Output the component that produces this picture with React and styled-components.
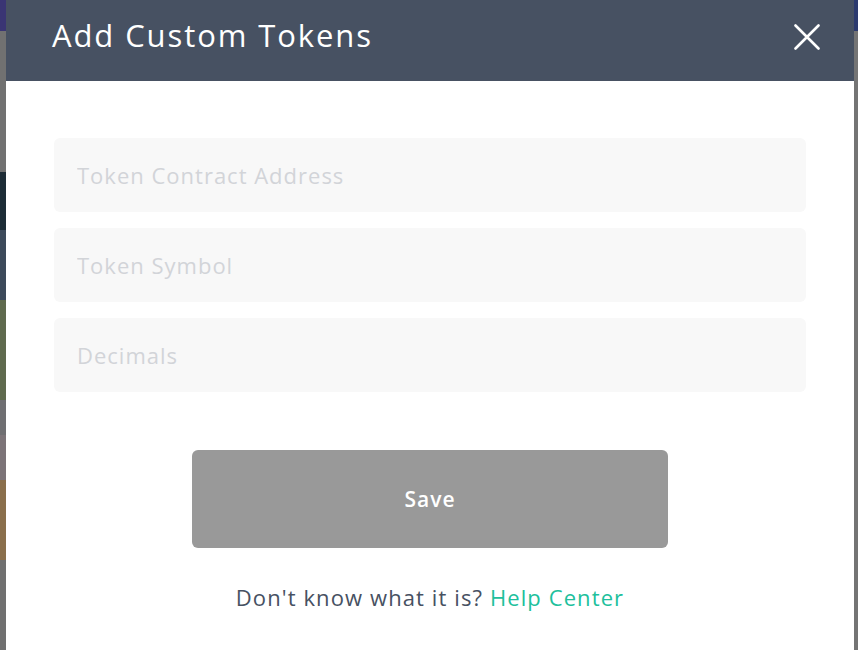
import React from 'react'
import styled, { createGlobalStyle } from 'styled-components'

const GlobalStyle = createGlobalStyle`
  html, body {
    margin: 0;
    padding: 0;
  }
  body {
    font-family: "Open Sans", "Liberation Sans", sans-serif;
  }
`

// the app behind the modal, only its edges show
const Page = styled.div`
  min-height: 650px;
  display: flex;
  padding-left: 6px;
  padding-right: 4px;
  background:
    linear-gradient(to bottom, #2c3a6e 0 31px, #747474 31px) right top / 4px 100% no-repeat,
    linear-gradient(
      to bottom,
      #3a3574 0 31px,
      #717171 31px 172px,
      #1d2c36 172px 230px,
      #3c4a5a 230px 300px,
      #5f6a4e 300px 400px,
      #6f6f72 400px 435px,
      #7c7478 435px 480px,
      #8a6f4c 480px 560px,
      #707070 560px
    );
`

const Modal = styled.div`
  flex: 1;
  background: #ffffff;
  display: flex;
  flex-direction: column;
  min-height: 650px;
`

const Header = styled.div`
  height: 81px;
  box-sizing: border-box;
  background: #475162;
  display: flex;
  align-items: center;
  justify-content: space-between;
  padding: 0 34px 12px 46px;
`

const Title = styled.h2`
  margin: 0;
  color: #ffffff;
  font-size: 31px;
  font-weight: 400;
  letter-spacing: 1.9px;
`

const CloseButton = styled.button`
  width: 26px;
  height: 26px;
  padding: 0;
  border: none;
  background: none;
  display: flex;
  cursor: pointer;
  margin-top: 4px;
`

const Body = styled.div`
  padding: 57px 48px 0;
  display: flex;
  flex-direction: column;
  align-items: center;
`

const Fields = styled.div`
  width: 100%;
  display: flex;
  flex-direction: column;
  gap: 16px;
`

const Field = styled.input`
  height: 74px;
  box-sizing: border-box;
  border: none;
  border-radius: 6px;
  background: #f8f8f8;
  padding: 0 23px 1px;
  font-family: inherit;
  font-size: 22px;
  letter-spacing: 1px;
  color: #475162;
  outline: none;
  &::placeholder {
    color: #d2d4d8;
  }
`

const SaveButton = styled.button`
  margin-top: 58px;
  width: 476px;
  height: 98px;
  border: none;
  border-radius: 6px;
  background: #999999;
  color: #ffffff;
  font-family: inherit;
  font-size: 21px;
  font-weight: 600;
  letter-spacing: 1px;
  padding-bottom: 2px;
  cursor: pointer;
`

const Hint = styled.p`
  margin: 34px 0 0;
  color: #475162;
  font-size: 22px;
  letter-spacing: 1.1px;
  text-align: center;
`

const HelpLink = styled.a`
  color: #20bf9c;
  text-decoration: none;
`

const CloseIcon = () => (
  <svg width="26" height="26" viewBox="0 0 26 26">
    <path d="M1.5 1.5 L24.5 24.5 M24.5 1.5 L1.5 24.5" stroke="#ffffff" strokeWidth="2.6" strokeLinecap="round" />
  </svg>
)

const App = () => {
  return (
    <>
      <GlobalStyle />
      <Page>
        <Modal>
          <Header>
            <Title>Add Custom Tokens</Title>
            <CloseButton aria-label="Close"><CloseIcon /></CloseButton>
          </Header>
          <Body>
            <Fields>
              <Field placeholder="Token Contract Address" />
              <Field placeholder="Token Symbol" />
              <Field placeholder="Decimals" />
            </Fields>
            <SaveButton>Save</SaveButton>
            <Hint>
              Don't know what it is? <HelpLink href="#">Help Center</HelpLink>
            </Hint>
          </Body>
        </Modal>
      </Page>
    </>
  )
}

export default App
